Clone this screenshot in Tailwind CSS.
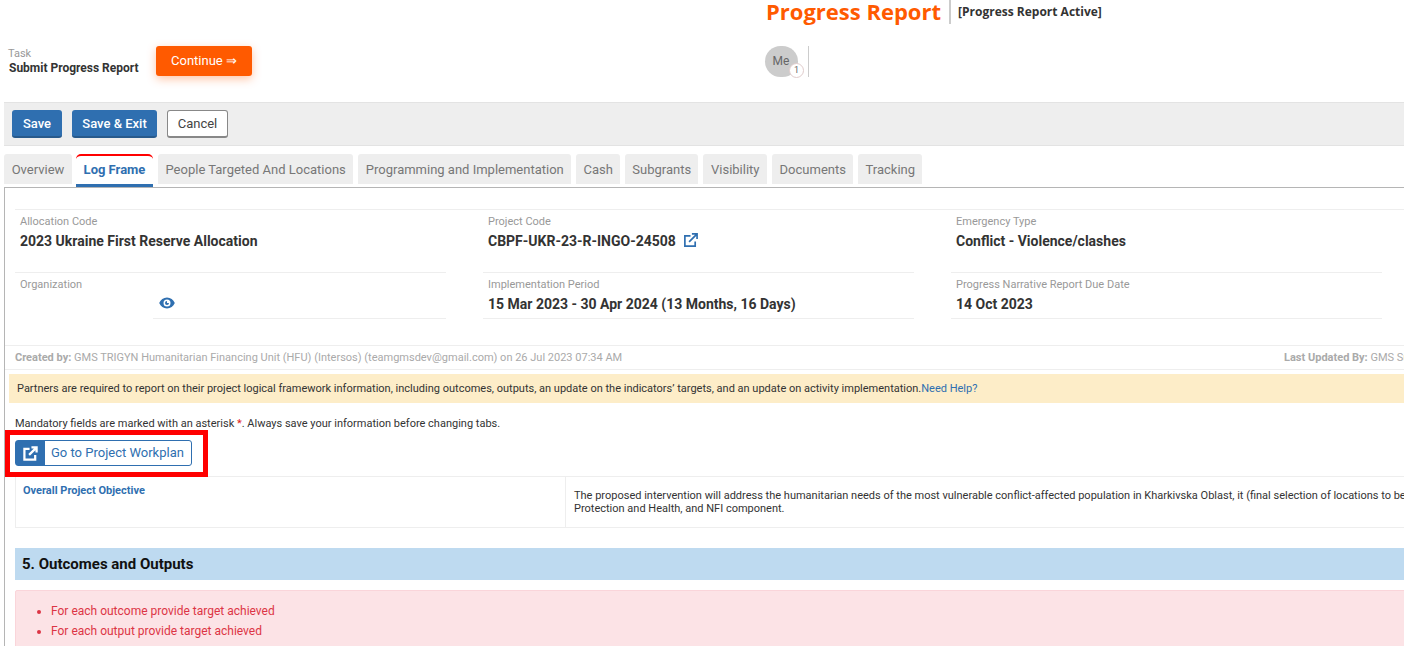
<!DOCTYPE html>
<html lang="en">
<head>
<meta charset="utf-8">
<title>Progress Report</title>
<script src="https://cdn.jsdelivr.net/npm/@tailwindcss/browser@4"></script>
</head>
<body class="bg-white font-['Roboto',sans-serif] overflow-hidden">
<div class="w-[1404px] h-[646px] overflow-hidden relative">

  <!-- header -->
  <header class="h-[102px] relative">
    <div class="flex pl-[766px] h-[46px] items-start">
      <h1 class="font-['Open_Sans',sans-serif] font-bold text-[22px] leading-[22px] text-[#ff5a00] whitespace-nowrap">Progress Report</h1>
      <div class="w-[2px] h-[24px] bg-[#ccc] ml-[8px]"></div>
      <span class="font-['Open_Sans',sans-serif] font-bold text-[12px] leading-[24px] text-[#333] ml-[7px] whitespace-nowrap">[Progress Report Active]</span>
    </div>
    <div class="flex items-start">
      <div class="pl-[8px] w-[156px] pt-[1px]">
        <div class="text-[11px] leading-[13px] text-[#999]">Task</div>
        <div class="text-[12px] leading-[16px] ml-[1px] font-bold text-[#333] whitespace-nowrap">Submit Progress Report</div>
      </div>
      <button class="w-[96px] h-[30px] rounded-[3px] bg-[#ff5a00] text-white text-[13px] shadow-[0_3px_10px_rgba(255,90,0,0.35)]">Continue ⇒</button>
      <div class="ml-[513px] relative w-[33px] h-[31px] rounded-full bg-[#ccc] text-[#666] text-[12px] leading-[31px] text-center pr-[1px]">Me
        <span class="absolute right-[-6px] bottom-[-1px] w-[15px] h-[15px] rounded-full bg-white border border-[#e0cccc] text-[9px] leading-[13px] text-[#666] text-center">1</span>
      </div>
      <div class="w-px h-[31px] bg-[#ccc] ml-[10px]"></div>
    </div>
  </header>

  <!-- toolbar -->
  <div class="ml-[4px] h-[44px] bg-[#eee] border-y border-[#e3e3e3] flex items-start gap-[10px] pl-[8px] pt-[7px]">
    <button class="w-[50px] h-[28px] pt-[2px] rounded-[3px] bg-[#2f6fb0] border-b-2 border-[#285a8c] text-white text-[13px] font-medium">Save</button>
    <button class="w-[85px] h-[28px] pt-[2px] rounded-[3px] bg-[#2f6fb0] border-b-2 border-[#285a8c] text-white text-[13px] font-medium">Save &amp; Exit</button>
    <button class="w-[61px] h-[28px] rounded-[3px] bg-white border border-[#888] border-b-2 text-[#444] text-[13px]">Cancel</button>
  </div>

  <!-- tabs -->
  <nav class="ml-[4px] mt-[8px] h-[33px] flex items-start gap-[5px] text-[13px] text-[#777]">
    <a class="h-[30px] w-[68px] bg-[#eee] rounded-t-[3px] leading-[31px] text-center">Overview</a>
    <a class="h-[33px] w-[77px] -ml-px bg-white border-t-2 border-[#f00] border-b-[3px] border-b-[#2f6fb0] rounded-t-[5px] leading-[28px] text-center font-bold text-[#2f6fb0]">Log Frame</a>
    <a class="h-[30px] px-[7.5px] bg-[#eee] rounded-t-[3px] leading-[31px] whitespace-nowrap">People Targeted And Locations</a>
    <a class="h-[30px] px-[7.5px] bg-[#eee] rounded-t-[3px] leading-[31px] whitespace-nowrap">Programming and Implementation</a>
    <a class="h-[30px] w-[44px] text-center bg-[#eee] rounded-t-[3px] leading-[31px]">Cash</a>
    <a class="h-[30px] w-[73px] text-center bg-[#eee] rounded-t-[3px] leading-[31px]">Subgrants</a>
    <a class="h-[30px] w-[64px] text-center bg-[#eee] rounded-t-[3px] leading-[31px]">Visibility</a>
    <a class="h-[30px] w-[81px] text-center bg-[#eee] rounded-t-[3px] leading-[31px]">Documents</a>
    <a class="h-[30px] w-[64px] text-center bg-[#eee] rounded-t-[3px] leading-[31px]">Tracking</a>
  </nav>

  <!-- content -->
  <main class="ml-[4px] w-[1500px] h-[600px] border-l border-t border-[#b5b5b5]">
    <div class="ml-[10px] mt-[21px] w-[1480px] border-t border-[#eee] h-[63px] flex">
      <div class="w-[468px] pl-[5px] pt-[5px]">
        <div class="text-[11px] leading-[13px] text-[#999]">Allocation Code</div>
        <div class="text-[14px] leading-[20px] mt-[3px] font-bold text-[#333]">2023 Ukraine First Reserve Allocation</div>
      </div>
      <div class="w-[468px] pl-[5px] pt-[5px]">
        <div class="text-[11px] leading-[13px] text-[#999]">Project Code</div>
        <div class="text-[14px] leading-[20px] mt-[3px] font-bold text-[#333] flex items-center gap-[7px]">CBPF-UKR-23-R-INGO-24508
          <svg class="w-[15px] h-[15px] mb-[2px]" viewBox="0 0 16 16" fill="none" stroke="#2f6fb0" stroke-width="1.800"><path d="M13 9v5H2V3h6"/><path d="M6.500 9.500 14.500 1.500M9.500 1h5.500v5.500"/></svg>
        </div>
      </div>
      <div class="pl-[5px] pt-[5px]">
        <div class="text-[11px] leading-[13px] text-[#999]">Emergency Type</div>
        <div class="text-[14px] leading-[20px] mt-[3px] font-bold text-[#333]">Conflict - Violence/clashes</div>
      </div>
    </div>
    <div class="ml-[10px] flex h-[47px]">
      <div class="w-[431px] border-t border-[#eee] relative pl-[5px] pt-[5px]">
        <div class="text-[11px] leading-[13px] text-[#999]">Organization</div>
        <div class="absolute left-[138px] right-0 top-0 bottom-0 border-b border-[#eee] flex items-start pl-[6px] pt-[24px]">
          <svg class="w-[16px] h-[12px]" viewBox="0 0 16 12"><path fill="#2f6fb0" fill-rule="evenodd" d="M8 .5C4.500.5 1.600 2.600.2 6c1.400 3.400 4.300 5.500 7.800 5.500s6.400-2.100 7.800-5.500C14.400 2.600 11.500.5 8 .5Zm0 2a3.500 3.500 0 1 1 0 7 3.500 3.500 0 0 1 0-7Zm0 1.500a2 2 0 1 0 2 2H8Z"/></svg>
        </div>
      </div>
      <div class="w-[431px] ml-[37px] border-t border-b border-[#eee] pl-[5px] pt-[5px]">
        <div class="text-[11px] leading-[13px] text-[#999]">Implementation Period</div>
        <div class="text-[14px] leading-[20px] mt-[3px] font-bold text-[#333]">15 Mar 2023 - 30 Apr 2024 (13 Months, 16 Days)</div>
      </div>
      <div class="w-[431px] ml-[37px] border-t border-b border-[#eee] pl-[5px] pt-[5px]">
        <div class="text-[11px] leading-[13px] text-[#999]">Progress Narrative Report Due Date</div>
        <div class="text-[14px] leading-[20px] mt-[3px] font-bold text-[#333]">14 Oct 2023</div>
      </div>
    </div>

    <div class="mt-[26px] w-[1399px] h-[25px] pt-[2px] border-y border-[#eee] pl-[10px] flex justify-between items-center text-[11px] text-[#aaa] whitespace-nowrap overflow-hidden">
      <div><b class="text-[#aaa]">Created by:</b> GMS TRIGYN Humanitarian Financing Unit (HFU) (Intersos) (teamgmsdev@gmail.com) on 26 Jul 2023 07:34 AM</div>
      <div class="w-[120px] overflow-hidden"><b>Last Updated By:</b> GMS Super</div>
    </div>

    <div class="ml-[4px] mt-[4px] h-[29px] w-[1395px] bg-[#fdedc8] pl-[8px] text-[11px] leading-[29px] text-[#333] whitespace-nowrap">Partners are required to report on their project logical framework information, including outcomes, outputs, an update on the indicators’ targets, and an update on activity implementation.<a class="text-[#2f6fb0]">Need Help?</a></div>

    <p class="ml-[10px] mt-[14px] text-[11px] leading-[14px] text-[#333]">Mandatory fields are marked with an asterisk <span class="text-[#e02020]">*</span>. Always save your information before changing tabs.</p>

    <a class="ml-[10px] mt-[9px] w-[177px] h-[26px] flex items-stretch border border-[#2f6fb0] rounded-[3px] text-[13px] text-[#2f6fb0]">
      <span class="w-[29px] bg-[#2f6fb0] flex items-center justify-center">
        <svg class="w-[15px] h-[15px]" viewBox="0 0 16 16" fill="none" stroke="#fff" stroke-width="2.400"><path d="M13 9.500V14.500H1.500V3H7"/><path d="M6.500 9.500 14 2M9 1.500h5.500v5.500"/></svg>
      </span>
      <span class="pl-[6px] leading-[24px] whitespace-nowrap">Go to Project Workplan</span>
    </a>

    <div class="ml-[10px] mt-[10px] w-[1480px] h-[52px] border border-[#eee] flex text-[11px]">
      <div class="w-[550px] border-r border-[#eee] pl-[7px] pt-[7px] font-bold text-[#2f6fb0] leading-[14px]">Overall Project Objective</div>
      <div class="pl-[8px] pt-[12px] leading-[13px] text-[#333] whitespace-nowrap">The proposed intervention will address the humanitarian needs of the most vulnerable conflict-affected population in Kharkivska Oblast, it (final selection of locations to be<br>Protection and Health, and NFI component.</div>
    </div>

    <h2 class="ml-[10px] mt-[20px] w-[1480px] h-[32px] bg-[#bedaf0] pl-[7px] text-[15px] leading-[33px] font-bold text-[#111]">5. Outcomes and Outputs</h2>

    <div class="ml-[10px] mt-[10px] w-[1480px] h-[80px] bg-[#fce3e6] border border-[#fad5da] rounded-[2px] text-[12px] leading-[20px] text-[#dc3545]">
      <ul class="list-disc pl-[35px] pt-[10px]">
        <li>For each outcome provide target achieved</li>
        <li>For each output provide target achieved</li>
      </ul>
    </div>
  </main>

  <!-- red highlight drawn over the screenshot -->
  <div class="absolute left-[5px] top-[430px] w-[203px] h-[47px] border-[5px] border-[#f00]"></div>
</div>
</body>
</html>
